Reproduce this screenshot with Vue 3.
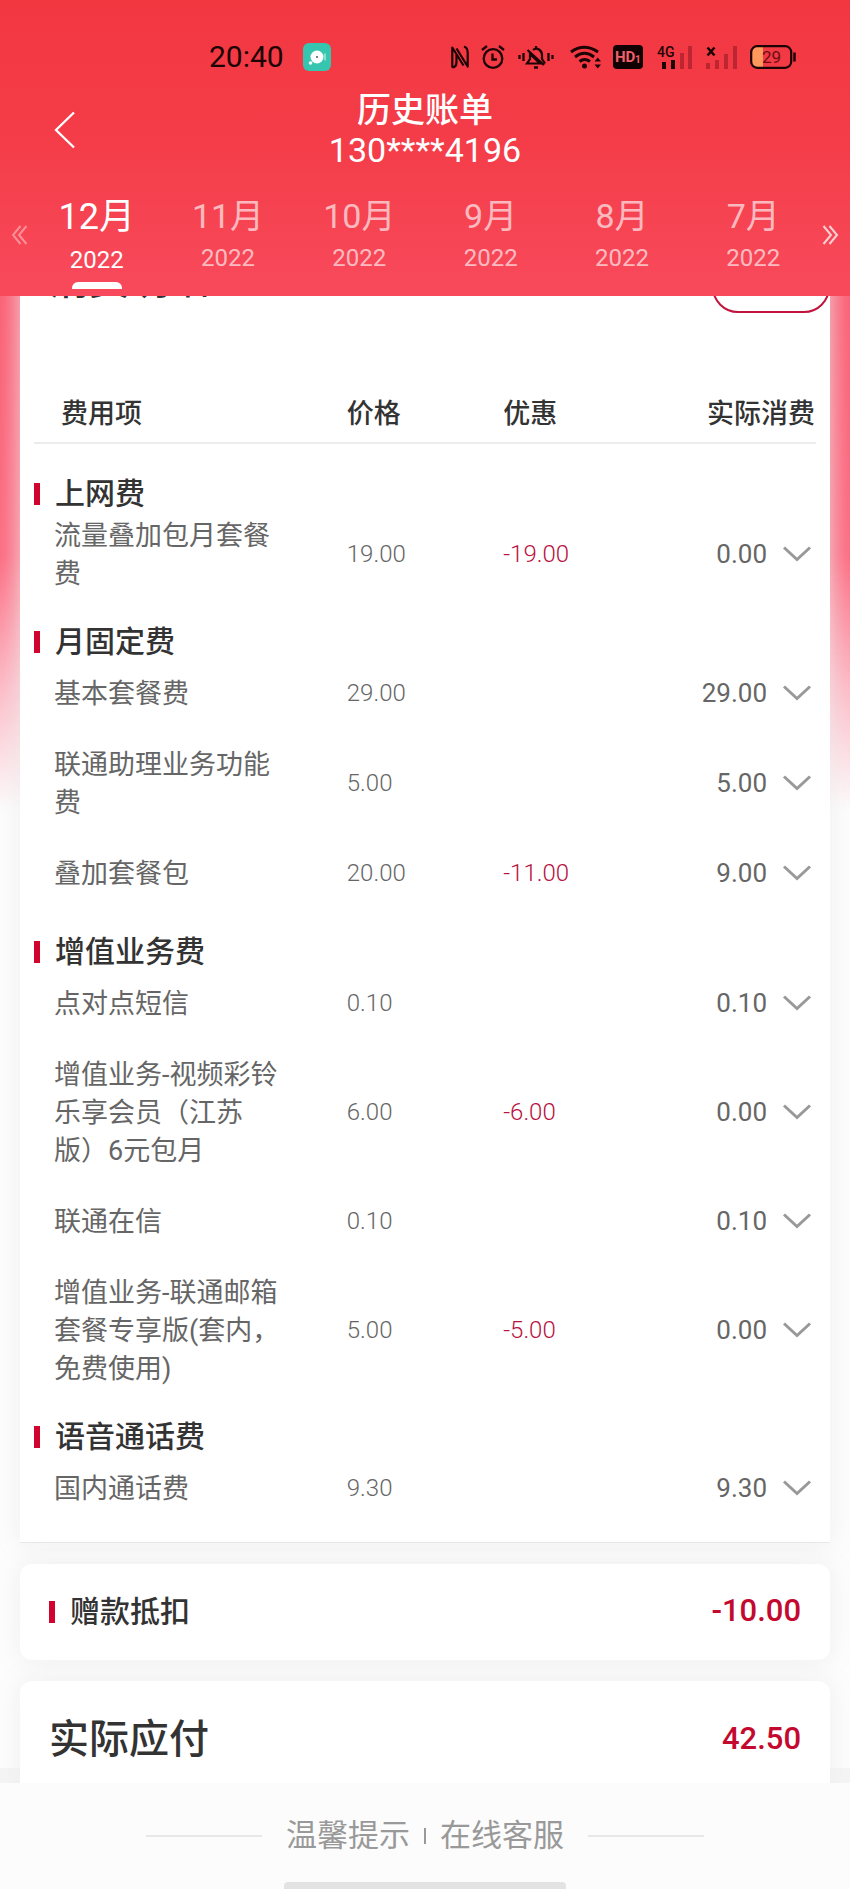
<script setup>
import { ref } from 'vue'

const months = [
  { label: '12月', year: '2022' },
  { label: '11月', year: '2022' },
  { label: '10月', year: '2022' },
  { label: '9月', year: '2022' },
  { label: '8月', year: '2022' },
  { label: '7月', year: '2022' }
]
const activeMonth = ref(0)

const groups = [
  {
    name: '上网费',
    items: [{ name: '流量叠加包月套餐费', price: '19.00', discount: '-19.00', total: '0.00' }]
  },
  {
    name: '月固定费',
    items: [
      { name: '基本套餐费', price: '29.00', discount: '', total: '29.00' },
      { name: '联通助理业务功能费', price: '5.00', discount: '', total: '5.00' },
      { name: '叠加套餐包', price: '20.00', discount: '-11.00', total: '9.00' }
    ]
  },
  {
    name: '增值业务费',
    items: [
      { name: '点对点短信', price: '0.10', discount: '', total: '0.10' },
      { name: '增值业务-视频彩铃乐享会员（江苏版）6元包月', price: '6.00', discount: '-6.00', total: '0.00' },
      { name: '联通在信', price: '0.10', discount: '', total: '0.10' },
      { name: '增值业务-联通邮箱套餐专享版(套内，免费使用)', price: '5.00', discount: '-5.00', total: '0.00' }
    ]
  },
  {
    name: '语音通话费',
    items: [{ name: '国内通话费', price: '9.30', discount: '', total: '9.30' }]
  }
]
</script>

<template>
  <div class="page">
    <header class="top">
      <div class="status">
        <span class="clock">20:40</span>
        <svg class="app-badge" width="28" height="28" viewBox="0 0 28 28" aria-hidden="true">
          <rect width="28" height="28" rx="6" fill="#36c5ae" />
          <circle cx="14" cy="14" r="6.5" fill="#fff" />
          <circle cx="14" cy="14" r="1" fill="#555" />
          <circle cx="7.5" cy="20" r="1.8" fill="#fff" />
          <path d="M22 10.500v7" stroke="#b5eee3" stroke-width="1.300" />
        </svg>
        <div class="status-icons" aria-hidden="true">
          <svg class="nfc" width="18" height="24" viewBox="0 0 18 24" fill="none" stroke="#1c0405" stroke-width="2.200" stroke-linejoin="round">
            <path d="M1.300 22.500V2.500L12.500 20.500" />
            <path d="M5.500 3.500L16.700 21.500V8Q16.700 2.500 13 1.500" />
            <path d="M1.300 22.500Q5.500 22 5.500 17V10" />
          </svg>
          <svg class="alarm" width="24" height="24" viewBox="0 0 24 24" fill="none" stroke="#1c0405" stroke-width="2.300">
            <circle cx="12" cy="13.500" r="9.300" />
            <path d="M11.500 8.500v6h4.500M1 5l5-4M23 5l-5-4" />
          </svg>
          <svg class="bell" width="36" height="24" viewBox="0 0 36 24" fill="none" stroke="#1c0405" stroke-width="2.200">
            <path d="M1.500 10v4M5.500 8v8M30.500 8v8M34.500 10v4" stroke-width="2.300" />
            <path d="M15 5Q18 2.500 21 4.500Q24 6.500 24 10V14L27 18.500M22 18.500H9L12 14V9Z" />
            <path d="M9.500 5L26 20M18 1v3" />
            <path d="M16 22.500h4" stroke-width="2.500" />
          </svg>
          <svg class="wifi" width="32" height="24" viewBox="0 0 32 24" fill="none" stroke="#1c0405" stroke-width="3">
            <path d="M1 7Q14-2.500 28 7M5 12Q14.500 4.500 24 12M9.500 16.500Q14.500 12.500 20 16.500" />
            <circle cx="14.500" cy="21" r="2.500" fill="#1c0405" stroke="none" />
            <path d="M24.500 16.500L27.800 12.500L31 16.500ZM24.500 19.500L27.800 23.500L31 19.500Z" fill="#1c0405" stroke="none" />
          </svg>
          <svg class="hd" width="30" height="24" viewBox="0 0 30 24">
            <rect width="30" height="24" rx="4" fill="#100102" />
            <text x="2" y="17" font-family="Roboto, sans-serif" font-size="15" font-weight="700" fill="#f2606a">HD</text>
            <text x="22" y="18" font-family="Roboto, sans-serif" font-size="10" font-weight="700" fill="#f2606a">1</text>
          </svg>
          <svg class="signal" width="36" height="24" viewBox="0 0 36 24">
            <text x="0" y="12" font-family="Roboto, sans-serif" font-size="14" font-weight="500" fill="#1c0405">4G</text>
            <path d="M5 17h4v7h-4zM14 15h4v9h-4z" fill="#1c0405" />
            <path d="M23 8h4v16h-4zM31 1h4v23h-4z" fill="#bd2630" />
          </svg>
          <svg class="signal-off" width="31" height="24" viewBox="0 0 31 24">
            <path d="M1.500 2.500l7 8M8.500 2.500l-7 8" stroke="#1c0405" stroke-width="2.500" />
            <path d="M0 18h4v6h-4zM9 15h4v9h-4zM18 9h4v15h-4zM27 1h4v23h-4z" fill="#bd2630" />
          </svg>
          <svg class="battery" width="46" height="24" viewBox="0 0 46 24">
            <path d="M7 2h6v20h-6q-5 0-5-5v-10q0-5 5-5z" fill="#ff9a5c" />
            <rect x="1.200" y="1.200" width="40" height="21.600" rx="6" fill="none" stroke="#1c0405" stroke-width="2.200" />
            <path d="M44.500 7.500v9" stroke="#1c0405" stroke-width="2.500" />
            <text x="12" y="18" font-family="Roboto, sans-serif" font-size="17" fill="#6b0d14">29</text>
          </svg>
        </div>
      </div>

      <div class="nav">
        <button class="back" type="button" aria-label="返回">
          <svg width="22" height="38" viewBox="0 0 22 38" fill="none" stroke="#fff" stroke-width="2.300">
            <path d="M20 1.500L2 19L20 36.500" />
          </svg>
        </button>
        <div class="heading">
          <h1>历史账单</h1>
          <p>130****4196</p>
        </div>
      </div>

      <div class="months">
        <button class="shift prev" type="button" aria-label="上一页">
          <svg width="17" height="20" viewBox="0 0 17 20" fill="none" stroke="#fff" stroke-width="2">
            <path d="M9.500 1L2 10L9.500 19M15.500 1L8 10L15.500 19" />
          </svg>
        </button>
        <div class="tabs" role="tablist">
          <button
            v-for="(m, i) in months"
            :key="m.label"
            type="button"
            role="tab"
            class="tab"
            :class="{ active: i === activeMonth }"
            :aria-selected="i === activeMonth"
            @click="activeMonth = i"
          >
            <span class="month">{{ m.label }}</span>
            <span class="year">{{ m.year }}</span>
          </button>
        </div>
        <button class="shift next" type="button" aria-label="下一页">
          <svg width="17" height="20" viewBox="0 0 17 20" fill="none" stroke="#fff" stroke-width="2">
            <path d="M1.500 1L9 10L1.500 19M7.500 1L15 10L7.500 19" />
          </svg>
        </button>
      </div>
    </header>

    <main class="content">
      <section class="card detail">
        <div class="detail-title">
          <h2>消费明细</h2>
          <button class="toggle" type="button" aria-label="展开"></button>
        </div>
        <table>
          <thead>
            <tr>
              <th class="c-name" scope="col">费用项</th>
              <th scope="col">价格</th>
              <th scope="col">优惠</th>
              <th class="c-total" scope="col">实际消费</th>
            </tr>
          </thead>
          <tbody v-for="g in groups" :key="g.name">
            <tr>
              <th class="group" colspan="4" scope="rowgroup">
                <div class="marked">{{ g.name }}</div>
              </th>
            </tr>
            <tr v-for="item in g.items" :key="item.name">
              <td class="name">{{ item.name }}</td>
              <td class="price">{{ item.price }}</td>
              <td class="discount">{{ item.discount }}</td>
              <td>
                <div class="total">
                  <span>{{ item.total }}</span>
                  <button type="button" aria-label="展开明细">
                    <svg width="28" height="16" viewBox="0 0 28 16" fill="none" stroke="#999" stroke-width="3">
                      <path d="M1 1.500L14 13.500L27 1.500" />
                    </svg>
                  </button>
                </div>
              </td>
            </tr>
          </tbody>
        </table>
      </section>

      <section class="card gift">
        <div class="marked">赠款抵扣</div>
        <strong>-10.00</strong>
      </section>

      <section class="card due">
        <h2>实际应付</h2>
        <strong>42.50</strong>
      </section>
    </main>

    <footer class="bottom">
      <nav class="links">
        <i class="rule"></i>
        <a href="#tips">温馨提示</a>
        <i class="bar"></i>
        <a href="#service">在线客服</a>
        <i class="rule"></i>
      </nav>
      <div class="home"></div>
    </footer>
  </div>
</template>

<style>
body {
  margin: 0;
  background: #f6f6f6;
}
</style>

<style scoped>
* {
  box-sizing: border-box;
}
.page {
  font-family: Roboto, 'Noto Sans CJK SC', sans-serif;
  color: #333;
  display: flex;
  flex-direction: column;
  min-height: 100vh;
  text-spacing-trim: space-all;
}
h1,
h2,
p {
  margin: 0;
  font-weight: 500;
}
button {
  font-family: inherit;
  color: inherit;
  background: none;
  border: 0;
  padding: 0;
  cursor: pointer;
}
svg {
  display: block;
  flex: none;
  overflow: visible;
}

/* header */
.top {
  position: sticky;
  top: 0;
  z-index: 2;
  color: #fff;
  background: linear-gradient(#f23741, #f43d49 50%, #f84a5c);
}
.status {
  display: flex;
  align-items: center;
  height: 90px;
  padding: 24px 54px 0 209px;
}
.clock {
  font-size: 30px;
  line-height: 36px;
  color: #1c0405;
}
.app-badge {
  margin-left: 19px;
}
.status-icons {
  display: flex;
  align-items: center;
  margin-left: auto;
}
.alarm {
  margin-left: 12px;
}
.bell {
  margin-left: 13px;
}
.wifi {
  margin-left: 16px;
}
.hd {
  margin-left: 11px;
}
.signal {
  margin-left: 14px;
}
.signal-off {
  margin-left: 13px;
}
.battery {
  margin-left: 13px;
}
.nav {
  display: grid;
  grid-template-columns: 1fr auto 1fr;
  align-items: center;
}
.back {
  justify-self: start;
  margin-left: 54px;
}
.heading {
  text-align: center;
  font-size: 34px;
  line-height: 40px;
}
.heading h1 {
  font-size: 34px;
}
.heading p {
  font-weight: 400;
}
.months {
  display: flex;
  height: 126px;
}
.shift {
  display: flex;
  align-items: center;
  width: 31px;
  padding: 4px 3px 0;
  opacity: 0.75;
}
.prev {
  justify-content: flex-end;
  opacity: 0.4;
}
.tabs {
  flex: 1;
  display: grid;
  grid-template-columns: repeat(6, 1fr);
}
.tab {
  display: flex;
  flex-direction: column;
  align-items: center;
  gap: 8px;
  padding-top: 26px;
  color: rgba(255, 255, 255, 0.65);
}
.month {
  font-size: 34px;
  line-height: 40px;
}
.year {
  font-size: 24px;
  line-height: 28px;
}
.active {
  color: #fff;
}
.active .month {
  font-size: 36px;
  line-height: 42px;
}
.active::after {
  content: '';
  width: 50px;
  height: 7px;
  border-radius: 6px 6px 0 0;
  background: #fff;
}

/* bill cards */
.content {
  flex: 1;
  display: flex;
  flex-direction: column;
  gap: 21px;
  margin-top: -60px;
  padding: 0 20px;
  background: linear-gradient(
    #fb5a70 0,
    #fd6a80 320px,
    #fdb9c5 450px,
    #fdfdfd 575px,
    #fdfdfd calc(100% - 31px),
    #f5f5f5 calc(100% - 31px)
  );
}
.card {
  background: #fff;
  border-radius: 12px;
  box-shadow: 0 0 24px rgba(236, 236, 236, 0.9);
}
.detail {
  padding: 19px 14px 2px;
  border-radius: 0;
  border-bottom: 1px solid #e8e8e8;
}
.detail-title {
  display: flex;
  justify-content: space-between;
  margin: 0 -14px 0 15px;
}
h2 {
  font-size: 40px;
  line-height: 52px;
}
.toggle {
  width: 118px;
  height: 58px;
  border: 2px solid #c0143c;
  border-radius: 26px;
}
table {
  width: 100%;
  margin-top: 70px;
  table-layout: fixed;
  border-collapse: collapse;
  text-align: left;
}
th,
td {
  padding: 0;
}
thead th {
  height: 60px;
  padding-top: 2px;
  font-size: 27px;
  line-height: 38px;
  font-weight: 500;
  border-bottom: 2px solid #ececec;
}
thead .c-name {
  width: 40%;
  padding-left: 27px;
}
thead .c-total {
  padding-right: 1px;
  text-align: right;
}
.group {
  padding-top: 5px;
}
thead + tbody .group {
  padding-top: 28px;
}
.marked {
  display: flex;
  align-items: center;
  gap: 15px;
  font-size: 30px;
  line-height: 44px;
  font-weight: 500;
}
.marked::before {
  content: '';
  width: 6px;
  height: 22px;
  background: #d0042f;
}
tbody td {
  height: 81px;
  padding-bottom: 23px;
  vertical-align: middle;
  font-size: 24px;
  font-weight: 300;
  color: #666;
}
tbody .name {
  padding: 1px 60px 22px 20px;
  font-size: 27px;
  line-height: 38px;
  font-weight: 400;
}
tbody .discount {
  color: #b8123f;
}
.total {
  display: flex;
  align-items: center;
  justify-content: flex-end;
  gap: 16px;
  padding-right: 5px;
  font-size: 26px;
  font-weight: 400;
}
.gift,
.due {
  display: flex;
  align-items: center;
  justify-content: space-between;
  padding: 0 29px;
}
.gift {
  height: 96px;
}
.due {
  height: 118px;
}
strong {
  padding-bottom: 4px;
  font-size: 31px;
  font-weight: 500;
  color: #c4092f;
}

/* footer */
.bottom {
  position: sticky;
  bottom: 0;
  z-index: 2;
  display: flex;
  flex-direction: column;
  align-items: center;
  justify-content: space-between;
  height: 106px;
  margin-top: -16px;
  overflow: hidden;
  background: #fcfcfc;
}
.links {
  display: flex;
  align-items: center;
  justify-content: center;
  width: 100%;
  padding-top: 31px;
  font-size: 31px;
  line-height: 44px;
}
.links a {
  color: #999;
  text-decoration: none;
}
.rule {
  width: 116px;
  height: 2px;
  margin: 0 24px;
  background: #e8e8e8;
}
.bar {
  width: 2px;
  height: 16px;
  margin: 0 14px;
  background: #999;
}
.home {
  width: 282px;
  height: 7px;
  border-radius: 4px 4px 0 0;
  background: #e3e3e3;
}
</style>
